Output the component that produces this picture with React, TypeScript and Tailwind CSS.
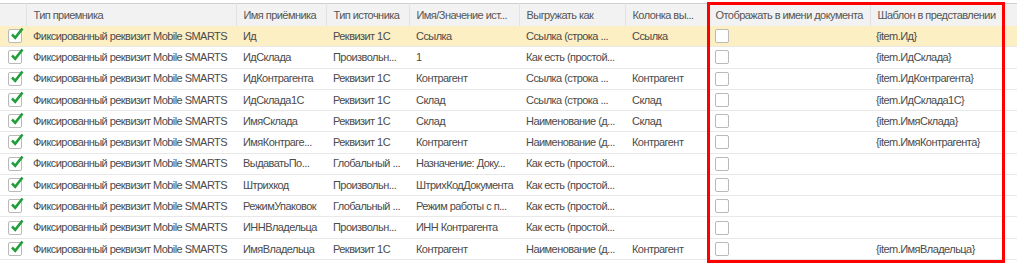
import React from 'react';

type Row = {
  name: string;
  srcType: string;
  srcValue: string;
  exportAs: string;
  column: string;
  template: string;
};

const rows: Row[] = [
  { name: 'Ид', srcType: 'Реквизит 1С', srcValue: 'Ссылка', exportAs: 'Ссылка (строка ...', column: 'Ссылка', template: '{item.Ид}' },
  { name: 'ИдСклада', srcType: 'Произвольн...', srcValue: '1', exportAs: 'Как есть (простой...', column: '', template: '{item.ИдСклада}' },
  { name: 'ИдКонтрагента', srcType: 'Реквизит 1С', srcValue: 'Контрагент', exportAs: 'Ссылка (строка ...', column: 'Контрагент', template: '{item.ИдКонтрагента}' },
  { name: 'ИдСклада1С', srcType: 'Реквизит 1С', srcValue: 'Склад', exportAs: 'Ссылка (строка ...', column: 'Склад', template: '{item.ИдСклада1С}' },
  { name: 'ИмяСклада', srcType: 'Реквизит 1С', srcValue: 'Склад', exportAs: 'Наименование (д...', column: 'Склад', template: '{item.ИмяСклада}' },
  { name: 'ИмяКонтраге...', srcType: 'Реквизит 1С', srcValue: 'Контрагент', exportAs: 'Наименование (д...', column: 'Контрагент', template: '{item.ИмяКонтрагента}' },
  { name: 'ВыдаватьПо...', srcType: 'Глобальный ...', srcValue: 'Назначение: Доку...', exportAs: 'Как есть (простой...', column: '', template: '' },
  { name: 'Штрихкод', srcType: 'Произвольн...', srcValue: 'ШтрихКодДокумента', exportAs: 'Как есть (простой...', column: '', template: '' },
  { name: 'РежимУпаковок', srcType: 'Глобальный ...', srcValue: 'Режим работы с п...', exportAs: 'Как есть (простой...', column: '', template: '' },
  { name: 'ИННВладельца', srcType: 'Произвольн...', srcValue: 'ИНН Контрагента', exportAs: 'Как есть (простой...', column: '', template: '' },
  { name: 'ИмяВладельца', srcType: 'Реквизит 1С', srcValue: 'Контрагент', exportAs: 'Наименование (д...', column: 'Контрагент', template: '{item.ИмяВладельца}' },
];

const CheckBox = ({ checked }: { checked?: boolean }) => (
  <div className="relative h-[14px] w-[14px] rounded-[2px] border border-[#b9b9b9] bg-white">
    {checked && (
      <svg className="absolute -top-[4px] left-[1px]" width="14" height="15" viewBox="0 0 14 15">
        <path d="M2 8.5 L5.2 11.8 L12.5 2.5" fill="none" stroke="#1f9e3a" strokeWidth="2.6" />
      </svg>
    )}
  </div>
);

const headers = [
  '',
  'Тип приемника',
  'Имя приёмника',
  'Тип источника',
  'Имя/Значение ист...',
  'Выгружать как',
  'Колонка вы...',
  'Отображать в имени документа',
  'Шаблон в представлении',
];

const widths = [26, 210, 90, 83, 110, 106, 83, 162, 147];

const App: React.FC = () => {
  return (
    <div className="relative h-[270px] w-[1024px] overflow-hidden bg-white font-['Liberation_Sans',Arial,sans-serif] text-[11px] tracking-[-0.55px] text-[#4b4b4b]">
      <div className="pt-[3px]">
        <table className="w-[1017px] table-fixed border-collapse">
          <colgroup>
            {widths.map((w, i) => (
              <col key={i} style={{ width: w }} />
            ))}
          </colgroup>
          <thead>
            <tr className="h-[22px] border-t border-[#cfcfcf] bg-[#f2f2f2]">
              {headers.map((h, i) => (
                <th
                  key={i}
                  className={`overflow-hidden whitespace-nowrap px-[7px] text-left font-normal text-[#555] ${i > 0 ? 'border-l border-[#e2e2e2]' : ''}`}
                >
                  {h}
                </th>
              ))}
            </tr>
          </thead>
          <tbody>
            {rows.map((r, i) => (
              <tr
                key={i}
                className={`h-[21.27px] border-b border-[#e8e8e8] ${i === 0 ? 'bg-[#fcefc3]' : 'bg-white'}`}
              >
                <td className="pl-[8px]">
                  <CheckBox checked />
                </td>
                <td className="overflow-hidden whitespace-nowrap px-[7px]">Фиксированный реквизит Mobile SMARTS</td>
                <td className="overflow-hidden whitespace-nowrap px-[7px]">{r.name}</td>
                <td className="overflow-hidden whitespace-nowrap px-[7px]">{r.srcType}</td>
                <td className="overflow-hidden whitespace-nowrap px-[7px]">{r.srcValue}</td>
                <td className="overflow-hidden whitespace-nowrap px-[7px]">{r.exportAs}</td>
                <td className="overflow-hidden whitespace-nowrap px-[7px]">{r.column}</td>
                <td className="px-[7px]">
                  <CheckBox />
                </td>
                <td className="overflow-hidden whitespace-nowrap px-[6px]">{r.template}</td>
              </tr>
            ))}
          </tbody>
        </table>
      </div>
      {/* highlight frame drawn over the two last columns */}
      <div className="pointer-events-none absolute left-[707px] top-[2px] h-[261px] w-[298px] border-[3px] border-[#f00]" />
    </div>
  );
};

export default App;
